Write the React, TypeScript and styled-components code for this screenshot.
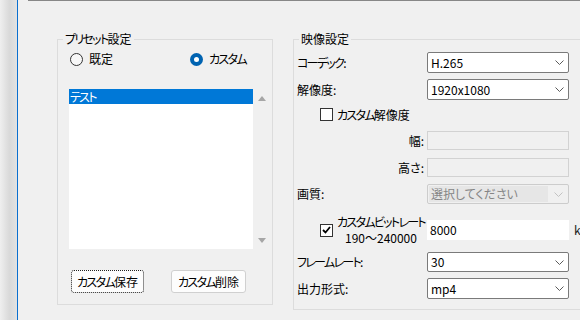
import { Fragment } from "react";
import styled, { createGlobalStyle } from "styled-components";

const GlobalStyle = createGlobalStyle`
  html, body {
    margin: 0;
    padding: 0;
    background: #f0f0f0;
    overflow: hidden;
  }
  body {
    font-family: "Noto Sans CJK JP", "Noto Sans", sans-serif;
    font-size: 12px;
    line-height: 16px;
    color: #000;
    font-feature-settings: "palt";
  }
`;

// katakana in the original UI font is much narrower than in Noto
const Kana = styled.span`
  letter-spacing: -1.7px;
`;

const JP = ({ children }: { children: string }) => (
  <>
    {children.split(/([\u30a0-\u30ff]+)/).map((part, i) =>
      /[\u30a0-\u30ff]/.test(part) ? (
        <Kana key={i}>{part}</Kana>
      ) : (
        <Fragment key={i}>{part}</Fragment>
      )
    )}
  </>
);

const Screen = styled.div`
  display: flex;
  width: 580px;
  height: 320px;
`;
const EdgeShadow = styled.div`
  width: 17px;
  background: linear-gradient(to right, #efefef, #d9d9d9 55%, #e3e3e3);
`;
const EdgeLine = styled.div`
  width: 1px;
  background: #0a6fcf;
`;
const Window = styled.div`
  flex: 1;
  display: flex;
  flex-direction: column;
  overflow: hidden;
`;
const TopRule = styled.div`
  height: 1px;
  margin-left: 10px;
  background: #878787;
`;
const Panels = styled.div`
  display: flex;
  align-items: flex-start;
  gap: 20px;
  padding: 30px 0 0 39px;
`;
const Group = styled.fieldset<{ $w: number; $h: number }>`
  box-sizing: border-box;
  flex: none;
  width: ${(p) => p.$w}px;
  height: ${(p) => p.$h}px;
  margin: 0;
  padding: 0;
  min-width: 0;
  border: 1px solid #dcdcdc;
`;
const Legend = styled.legend`
  margin-left: 5px;
  padding: 0 2px;
  line-height: 16px;
`;

/* preset side */
const RadioRow = styled.div`
  display: flex;
  align-items: center;
  height: 16px;
  margin: 4px 0 0 12px;
`;
const RadioOption = styled.label<{ $w?: number }>`
  display: flex;
  align-items: center;
  gap: 6px;
  width: ${(p) => (p.$w ? `${p.$w}px` : "auto")};
`;
const RadioDot = styled.span<{ $on?: boolean }>`
  box-sizing: border-box;
  width: 13px;
  height: 13px;
  border-radius: 50%;
  border: ${(p) => (p.$on ? "none" : "1px solid #333")};
  background: ${(p) => (p.$on ? "#0063b1" : "#f7f7f7")};
  display: flex;
  align-items: center;
  justify-content: center;
  &::after {
    content: "";
    display: ${(p) => (p.$on ? "block" : "none")};
    width: 5px;
    height: 5px;
    border-radius: 50%;
    background: #fff;
  }
`;
const ListArea = styled.div`
  display: flex;
  height: 160px;
  margin: 22px 0 0 11px;
`;
const ListBox = styled.div`
  width: 184px;
  background: #fff;
`;
const ListItem = styled.div<{ $selected?: boolean }>`
  height: 15px;
  line-height: 15px;
  padding-left: 1px;
  background: ${(p) => (p.$selected ? "#0078d7" : "transparent")};
  color: ${(p) => (p.$selected ? "#fff" : "#000")};
`;
const ScrollTrack = styled.div`
  box-sizing: border-box;
  width: 17px;
  display: flex;
  flex-direction: column;
  justify-content: space-between;
  align-items: center;
  padding: 7px 0 6px;
`;
const Arrow = styled.span<{ $down?: boolean }>`
  width: 0;
  height: 0;
  border-left: 4.5px solid transparent;
  border-right: 4.5px solid transparent;
  ${(p) =>
    p.$down
      ? "border-top: 5px solid #a6a6a6;"
      : "border-bottom: 5px solid #a6a6a6;"}
`;
const ButtonRow = styled.div`
  display: flex;
  gap: 27px;
  margin: 21px 0 0 13px;
`;
const Button = styled.button<{ $w: number; $focused?: boolean }>`
  box-sizing: border-box;
  width: ${(p) => p.$w}px;
  height: 23px;
  padding: 0;
  font: inherit;
  font-feature-settings: "palt";
  color: #000;
  background: #fdfdfd;
  border: 1px ${(p) => (p.$focused ? "dotted #222" : "solid #d0d0d0")};
  border-radius: 3px;
`;

/* video side */
const Form = styled.div`
  display: flex;
  flex-direction: column;
  padding-left: 3px;
`;
const Row = styled.div<{ $h: number; $mt: number }>`
  display: grid;
  grid-template-columns: 130px 142px auto;
  align-items: center;
  height: ${(p) => p.$h}px;
  margin-top: ${(p) => p.$mt}px;
`;
const Label = styled.span<{ $right?: boolean }>`
  text-align: ${(p) => (p.$right ? "right" : "left")};
  padding-right: ${(p) => (p.$right ? "3px" : "0")};
`;
const Select = styled.div<{ $disabled?: boolean }>`
  box-sizing: border-box;
  height: 100%;
  display: flex;
  align-items: center;
  border: 1px solid ${(p) => (p.$disabled ? "#cccccc" : "#7a7a7a")};
  border-radius: 2px;
  background: ${(p) => (p.$disabled ? "#f0f0f0" : "#fff")};
  padding: ${(p) => (p.$disabled ? "1px" : "0")};
`;
const SelectValue = styled.span<{ $disabled?: boolean }>`
  flex: 1;
  align-self: stretch;
  display: flex;
  align-items: center;
  padding-left: ${(p) => (p.$disabled ? "2px" : "3px")};
  background: ${(p) => (p.$disabled ? "#e6e6e6" : "transparent")};
  color: ${(p) => (p.$disabled ? "#858585" : "#000")};
`;
const Chevron = styled.svg`
  flex: none;
  margin: 0 4px 0 6px;
`;
const TextBox = styled.div<{ $disabled?: boolean; $h?: number }>`
  box-sizing: border-box;
  height: ${(p) => (p.$h ? `${p.$h}px` : "100%")};
  display: flex;
  align-items: center;
  padding-left: 2px;
  border: 1px solid ${(p) => (p.$disabled ? "#d2d2d2" : "#fff")};
  background: ${(p) => (p.$disabled ? "#f0f0f0" : "#fff")};
`;
const CheckField = styled.label<{ $ml: number; $span?: number }>`
  grid-column: 1 / span ${(p) => p.$span ?? 2};
  min-width: 0;
  display: flex;
  align-items: center;
  gap: 4px;
  margin-left: ${(p) => p.$ml}px;
  white-space: nowrap;
`;
const CheckBox = styled.span`
  box-sizing: border-box;
  flex: none;
  width: 13px;
  height: 13px;
  border: 1px solid #333;
  background: #fff;
  display: flex;
  align-items: center;
  justify-content: center;
`;
const BitrateLabel = styled.span`
  display: flex;
  flex-direction: column;
  align-items: center;
  line-height: 16px;
`;
const Unit = styled.span`
  padding-left: 5px;
  color: #222;
  white-space: nowrap;
`;

const ChevronIcon = ({ light }: { light?: boolean }) => (
  <Chevron width="9" height="5" viewBox="0 0 9 5">
    <path
      d="M0.5 0.5 L4.5 4.5 L8.5 0.5"
      fill="none"
      stroke={light ? "#c2c2c2" : "#5a5a5a"}
      strokeWidth="1"
    />
  </Chevron>
);

const Combo = ({ value, disabled }: { value: string; disabled?: boolean }) => (
  <Select $disabled={disabled}>
    <SelectValue $disabled={disabled}>{value}</SelectValue>
    <ChevronIcon light={disabled} />
  </Select>
);

const App = () => {
  return (
    <>
      <GlobalStyle />
      <Screen>
        <EdgeShadow />
        <EdgeLine />
        <Window>
          <TopRule />
          <Panels>
            <Group $w={216} $h={274}>
              <Legend>
                <JP>プリセット設定</JP>
              </Legend>
              <RadioRow>
                <RadioOption $w={120}>
                  <RadioDot />
                  既定
                </RadioOption>
                <RadioOption>
                  <RadioDot $on />
                  <JP>カスタム</JP>
                </RadioOption>
              </RadioRow>
              <ListArea>
                <ListBox>
                  <ListItem $selected>
                    <JP>テスト</JP>
                  </ListItem>
                </ListBox>
                <ScrollTrack>
                  <Arrow />
                  <Arrow $down />
                </ScrollTrack>
              </ListArea>
              <ButtonRow>
                <Button $w={73} $focused>
                  <JP>カスタム保存</JP>
                </Button>
                <Button $w={75}>
                  <JP>カスタム削除</JP>
                </Button>
              </ButtonRow>
            </Group>

            <Group $w={320} $h={279}>
              <Legend>映像設定</Legend>
              <Form>
                <Row $h={21} $mt={5}>
                  <Label>
                    <JP>コーデック:</JP>
                  </Label>
                  <Combo value="H.265" />
                </Row>
                <Row $h={21} $mt={6}>
                  <Label>解像度:</Label>
                  <Combo value="1920x1080" />
                </Row>
                <Row $h={21} $mt={4}>
                  <CheckField $ml={23}>
                    <CheckBox />
                    <span>
                      <JP>カスタム解像度</JP>
                    </span>
                  </CheckField>
                </Row>
                <Row $h={19} $mt={6}>
                  <Label $right>幅:</Label>
                  <TextBox $disabled />
                </Row>
                <Row $h={19} $mt={8}>
                  <Label $right>高さ:</Label>
                  <TextBox $disabled />
                </Row>
                <Row $h={20} $mt={7}>
                  <Label>画質:</Label>
                  <Combo value="選択してください" disabled />
                </Row>
                <Row $h={28} $mt={10}>
                  <CheckField $ml={23} $span={1}>
                    <CheckBox>
                      <svg width="9" height="8" viewBox="0 0 9 8">
                        <path
                          d="M1 4 L3.5 6.5 L8 1"
                          fill="none"
                          stroke="#000"
                          strokeWidth="1.8"
                        />
                      </svg>
                    </CheckBox>
                    <BitrateLabel>
                      <span>
                        <JP>カスタムビットレート</JP>
                      </span>
                      <span>190〜240000</span>
                    </BitrateLabel>
                  </CheckField>
                  <TextBox $h={20}>8000</TextBox>
                  <Unit>kbps</Unit>
                </Row>
                <Row $h={20} $mt={10}>
                  <Label>
                    <JP>フレームレート:</JP>
                  </Label>
                  <Combo value="30" />
                </Row>
                <Row $h={21} $mt={6}>
                  <Label>出力形式:</Label>
                  <Combo value="mp4" />
                </Row>
              </Form>
            </Group>
          </Panels>
        </Window>
      </Screen>
    </>
  );
};

export default App;
